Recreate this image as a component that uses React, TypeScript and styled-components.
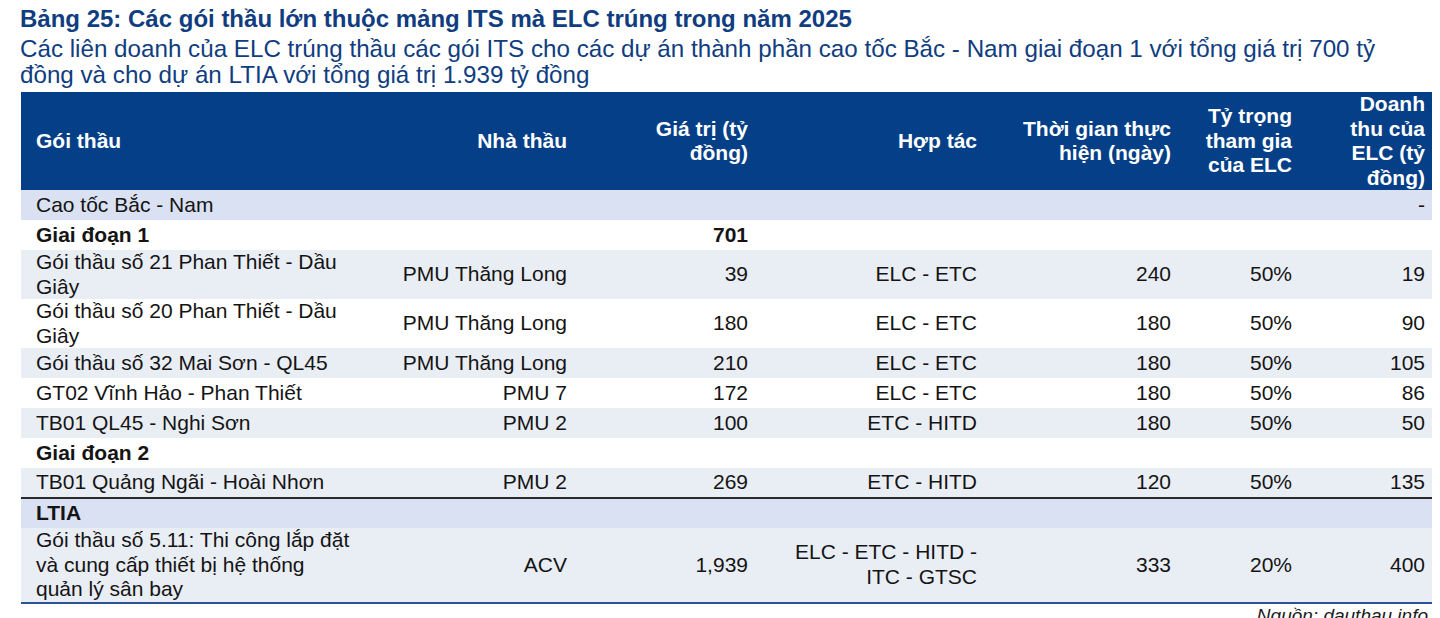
import React from 'react'
import styled, { createGlobalStyle } from 'styled-components'

const GlobalStyle = createGlobalStyle`
  html, body {
    margin: 0;
    padding: 0;
    background: #ffffff;
  }
  body {
    font-family: "Liberation Sans", Arial, sans-serif;
    overflow: hidden;
  }
`

const Page = styled.div`
  width: 1440px;
  height: 618px;
  padding: 6px 0 0 20px;
  box-sizing: border-box;
`

const Title = styled.h1`
  margin: 0;
  font-size: 24px;
  line-height: 26px;
  font-weight: 700;
  color: #0f3d80;
  white-space: nowrap;
`

const Subtitle = styled.p`
  margin: 4px 0 0;
  font-size: 24.2px;
  line-height: 26px;
  color: #0f3d80;
  white-space: nowrap;
`

const Table = styled.table`
  margin: 4px 0 0 1px;
  width: 1411px;
  border-collapse: collapse;
  table-layout: fixed;
  font-size: 21px;
  line-height: 24.5px;
  color: #141414;
  border-bottom: 2px solid #2b5496;
`

const HeadRow = styled.tr`
  background: #053f87;
  height: 98px;
`

const Th = styled.th<{ $left?: boolean }>`
  padding: 0 8px 0 ${(p) => (p.$left ? '15px' : '8px')};
  text-align: ${(p) => (p.$left ? 'left' : 'right')};
  vertical-align: middle;
  color: #ffffff;
  font-weight: 700;
  white-space: nowrap;
  &:last-child {
    padding-right: 7px;
  }
`

const Row = styled.tr<{ $bg: string; $rule?: boolean }>`
  background: ${(p) => p.$bg};
  height: 30px;
  border-bottom: ${(p) => (p.$rule ? '2px solid #2a2a2a' : 'none')};
`

const Td = styled.td<{ $left?: boolean; $bold?: boolean }>`
  padding: 0 8px 0 ${(p) => (p.$left ? '15px' : '8px')};
  text-align: ${(p) => (p.$left ? 'left' : 'right')};
  vertical-align: middle;
  font-weight: ${(p) => (p.$bold ? 700 : 400)};
  white-space: nowrap;
  &:last-child {
    padding-right: 7px;
  }
`

const Source = styled.div`
  width: 1408px;
  text-align: right;
  font-size: 19px;
  font-style: italic;
  line-height: 22px;
  color: #1d1d1d;
  margin-top: 1px;
`

const colWidths = [359, 195, 181, 229, 194, 121, 132]

type Line = {
  cells: React.ReactNode[]
  bg: string
  bold?: boolean
  rule?: boolean
}

const STRIPE = '#e9edf4'
const GROUP = '#d9e1f2'
const WHITE = '#ffffff'

const rows: Line[] = [
  { cells: ['Cao tốc Bắc - Nam', '', '', '', '', '', '-'], bg: GROUP },
  { cells: ['Giai đoạn 1', '', '701', '', '', '', ''], bg: WHITE, bold: true },
  {
    cells: [<>Gói thầu số 21 Phan Thiết - Dầu<br />Giây</>, 'PMU Thăng Long', '39', 'ELC - ETC', '240', '50%', '19'],
    bg: STRIPE,
  },
  {
    cells: [<>Gói thầu số 20 Phan Thiết - Dầu<br />Giây</>, 'PMU Thăng Long', '180', 'ELC - ETC', '180', '50%', '90'],
    bg: WHITE,
  },
  { cells: ['Gói thầu số 32 Mai Sơn - QL45', 'PMU Thăng Long', '210', 'ELC - ETC', '180', '50%', '105'], bg: STRIPE },
  { cells: ['GT02 Vĩnh Hảo - Phan Thiết', 'PMU 7', '172', 'ELC - ETC', '180', '50%', '86'], bg: WHITE },
  { cells: ['TB01 QL45 - Nghi Sơn', 'PMU 2', '100', 'ETC - HITD', '180', '50%', '50'], bg: STRIPE },
  { cells: ['Giai đoạn 2', '', '', '', '', '', ''], bg: WHITE, bold: true },
  { cells: ['TB01 Quảng Ngãi - Hoài Nhơn', 'PMU 2', '269', 'ETC - HITD', '120', '50%', '135'], bg: STRIPE, rule: true },
  { cells: ['LTIA', '', '', '', '', '', ''], bg: GROUP, bold: true },
  {
    cells: [
      <>Gói thầu số 5.11: Thi công lắp đặt<br />và cung cấp thiết bị hệ thống<br />quản lý sân bay</>,
      'ACV',
      '1,939',
      <>ELC - ETC - HITD -<br />ITC - GTSC</>,
      '333',
      '20%',
      '400',
    ],
    bg: STRIPE,
  },
]

export default function App() {
  return (
    <>
      <GlobalStyle />
      <Page>
        <Title>Bảng 25: Các gói thầu lớn thuộc mảng ITS mà ELC trúng trong năm 2025</Title>
        <Subtitle>
          Các liên doanh của ELC trúng thầu các gói ITS cho các dự án thành phần cao tốc Bắc - Nam giai đoạn 1 với tổng giá trị 700 tỷ
          <br />
          đồng và cho dự án LTIA với tổng giá trị 1.939 tỷ đồng
        </Subtitle>
        <Table>
          <colgroup>
            {colWidths.map((w, i) => (
              <col key={i} style={{ width: w }} />
            ))}
          </colgroup>
          <thead>
            <HeadRow>
              <Th $left>Gói thầu</Th>
              <Th>Nhà thầu</Th>
              <Th>Giá trị (tỷ<br />đồng)</Th>
              <Th>Hợp tác</Th>
              <Th>Thời gian thực<br />hiện (ngày)</Th>
              <Th>Tỷ trọng<br />tham gia<br />của ELC</Th>
              <Th>Doanh<br />thu của<br />ELC (tỷ<br />đồng)</Th>
            </HeadRow>
          </thead>
          <tbody>
            {rows.map((r, i) => (
              <Row key={i} $bg={r.bg} $rule={r.rule}>
                {r.cells.map((c, j) => (
                  <Td key={j} $left={j === 0} $bold={r.bold}>
                    {c}
                  </Td>
                ))}
              </Row>
            ))}
          </tbody>
        </Table>
        <Source>Nguồn: dauthau.info</Source>
      </Page>
    </>
  )
}
